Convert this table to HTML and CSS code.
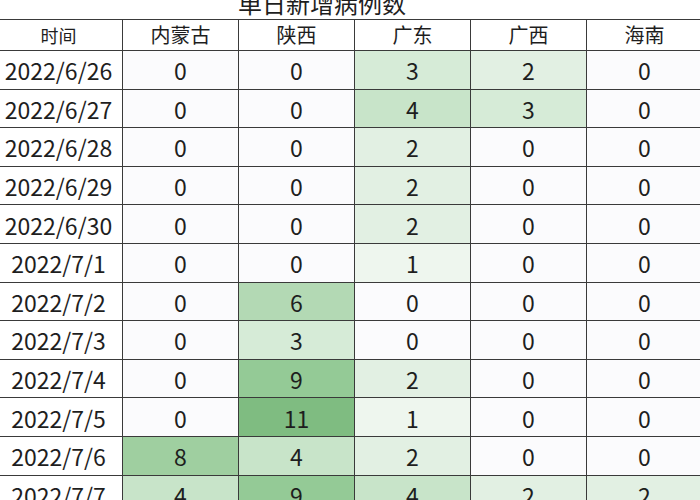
FILE: index.html
```html
<!DOCTYPE html>
<html lang="zh">
<head>
<meta charset="utf-8">
<link rel="stylesheet" href="styles.css">
</head>
<body>
<div class="title">单日新增病例数</div>
<table class="grid">
<colgroup><col class="c-date"><col><col><col><col><col></colgroup>
<thead>
<tr><th class="h-time">时间</th><th>内蒙古</th><th>陕西</th><th>广东</th><th>广西</th><th>海南</th></tr>
</thead>
<tbody>
<tr><td class="d">2022/6/26</td><td class="v0">0</td><td class="v0">0</td><td class="v3">3</td><td class="v2">2</td><td class="v0">0</td></tr>
<tr><td class="d">2022/6/27</td><td class="v0">0</td><td class="v0">0</td><td class="v4">4</td><td class="v3">3</td><td class="v0">0</td></tr>
<tr><td class="d">2022/6/28</td><td class="v0">0</td><td class="v0">0</td><td class="v2">2</td><td class="v0">0</td><td class="v0">0</td></tr>
<tr><td class="d">2022/6/29</td><td class="v0">0</td><td class="v0">0</td><td class="v2">2</td><td class="v0">0</td><td class="v0">0</td></tr>
<tr><td class="d">2022/6/30</td><td class="v0">0</td><td class="v0">0</td><td class="v2">2</td><td class="v0">0</td><td class="v0">0</td></tr>
<tr><td class="d">2022/7/1</td><td class="v0">0</td><td class="v0">0</td><td class="v1">1</td><td class="v0">0</td><td class="v0">0</td></tr>
<tr><td class="d">2022/7/2</td><td class="v0">0</td><td class="v6">6</td><td class="v0">0</td><td class="v0">0</td><td class="v0">0</td></tr>
<tr><td class="d">2022/7/3</td><td class="v0">0</td><td class="v3">3</td><td class="v0">0</td><td class="v0">0</td><td class="v0">0</td></tr>
<tr><td class="d">2022/7/4</td><td class="v0">0</td><td class="v9">9</td><td class="v2">2</td><td class="v0">0</td><td class="v0">0</td></tr>
<tr><td class="d">2022/7/5</td><td class="v0">0</td><td class="v11">11</td><td class="v1">1</td><td class="v0">0</td><td class="v0">0</td></tr>
<tr><td class="d">2022/7/6</td><td class="v8">8</td><td class="v4">4</td><td class="v2">2</td><td class="v0">0</td><td class="v0">0</td></tr>
<tr><td class="d">2022/7/7</td><td class="v4">4</td><td class="v9">9</td><td class="v4">4</td><td class="v2">2</td><td class="v2">2</td></tr>
</tbody>
</table>
</body>
</html>
```
FILE: styles.css
```css
html, body {
  margin: 0;
  padding: 0;
  overflow: hidden;
  background: #ffffff;
}
body {
  width: 700px;
  height: 500px;
  font-family: "Noto Sans CJK SC", "Noto Sans", sans-serif;
  color: #1e1e1e;
}
.title {
  width: 644px;
  margin-top: -9px;
  height: 28px;
  line-height: 24px;
  font-size: 24px;
  text-align: center;
  white-space: nowrap;
}
.grid {
  margin-left: -6px;
  width: 708px;
  table-layout: fixed;
  border-collapse: collapse;
}
.grid col { width: 116px; }
.grid col.c-date { width: 128px; }
.grid th, .grid td {
  border: 1px solid #3a3a3a;
  padding: 0;
  text-align: center;
  vertical-align: middle;
  white-space: nowrap;
}
.grid th {
  height: 30px;
  font-size: 20px;
  font-weight: normal;
  background: #ffffff;
  line-height: 24px;
}
.grid th.h-time { font-size: 18px; }
.grid td {
  height: 36.6px;
  font-size: 23px;
  line-height: 26px;
  padding-top: 1px;
}
.grid td.d { background: #ffffff; }
.v0 { background: #fbfbfd; }
.v1 { background: #eef6ee; }
.v2 { background: #e2f0e3; }
.v3 { background: #d6ebd7; }
.v4 { background: #c8e4c9; }
.v6 { background: #b3d9b4; }
.v8 { background: #9fcfa0; }
.v9 { background: #94ca96; }
.v11 { background: #7fbc81; }
```
